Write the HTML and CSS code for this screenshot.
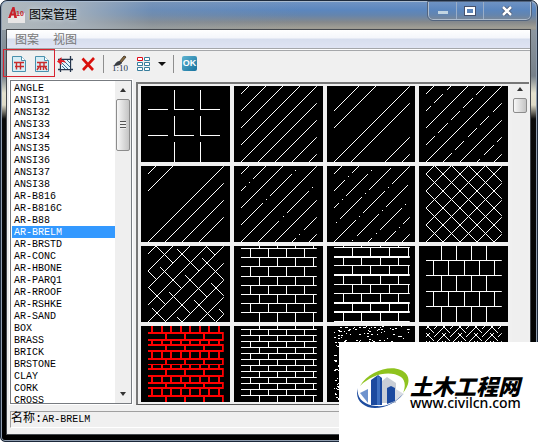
FILE: index.html
```html
<!DOCTYPE html>
<html lang="zh-CN">
<head>
<meta charset="utf-8">
<title>图案管理</title>
<link rel="stylesheet" href="styles.css">
</head>
<body>
<div class="window">
  <header class="titlebar">
    <svg class="app-icon" width="17" height="17" viewBox="0 0 17 17" aria-hidden="true">
      <path d="M0 9 L17 6 V16 H0Z" fill="#e8e6e6"/>
      <path d="M0 11 L4.5 0 H6.5 L9 11 H6.3 L5.9 8.6 H3.4 L2.6 11Z M4 6.5 H5.6 L5.1 3.6Z" fill="#c8202a" fill-rule="evenodd"/>
      <text x="8" y="9" class="app-icon-num">10</text>
    </svg>
    <h1>图案管理</h1>
    <div class="caption-buttons">
      <button type="button" aria-label="最小化"><svg width="12" height="10" viewBox="0 0 12 10"><path d="M1 5h10v3H1z" fill="#c2d5e2"/></svg></button>
      <button type="button" aria-label="最大化"><svg width="12" height="10" viewBox="0 0 12 10"><rect x="1.500" y="1.500" width="9" height="7" fill="none" stroke="#46516c" stroke-width="3"/><rect x="2" y="2" width="8" height="6" fill="none" stroke="#fff" stroke-width="2"/></svg></button>
      <button type="button" class="close" aria-label="关闭"><svg width="12" height="10" viewBox="0 0 12 10"><path d="M2 1 L10 9 M10 1 L2 9" stroke="#46516c" stroke-width="4"/><path d="M2 1 L10 9 M10 1 L2 9" stroke="#fff" stroke-width="2.500"/></svg></button>
    </div>
  </header>
  <div class="client">
    <nav class="menubar"><button type="button">图案</button><button type="button">视图</button></nav>
    <div class="toolbar">
      <button type="button" aria-label="图案文件"><svg width="16" height="18" viewBox="0 0 16 18"><path d="M1.500 1.500h9l4 4v11h-13z" fill="#d7eef6" stroke="#4a91ad"/><path d="M10.500 1.500v4h4" fill="#fff" stroke="#4a91ad"/><path d="M3 7.500h10M4 11.500h9M5.500 7.500v7M9.500 7.500v7" stroke="#c92b2b" stroke-width="1.400" fill="none"/></svg></button>
      <button type="button" aria-label="图案组"><svg width="16" height="18" viewBox="0 0 16 18"><path d="M1.500 1.500h9l4 4v11h-13z" fill="#d7eef6" stroke="#4a91ad"/><path d="M10.500 1.500v4h4" fill="#fff" stroke="#4a91ad"/><path d="M3 7.500h10M3 11.500h10M6 7.500v4M10 7.500v4M3 15l2-3M6.500 12v3M9.500 12v3M13 15l-2-3" stroke="#c92b2b" stroke-width="1.400" fill="none"/></svg></button>
      <button type="button" aria-label="填充"><svg width="16" height="18" viewBox="0 0 16 18"><path d="M3.500 3v14M13.500 1v16M1 4.500h15M1 14.500h15" stroke="#26364d" stroke-width="1.300"/><path d="M4 5h9v9H4z" fill="#e4f3fa"/><path d="M5 11l3 3M4 7l7 7M6 5l7 7M10 5l3 3" stroke="#3c7197"/><path d="M0 6.500L4.500 2v3c3 0 4 1 4 3-1-1-2-1-4-1v3z" fill="#e31b23"/></svg></button>
      <button type="button" aria-label="删除"><svg width="16" height="18" viewBox="0 0 16 18"><path d="M2.500 3.500L13 15M14 3L3 15" stroke="#d9100c" stroke-width="2.600" fill="none"/></svg></button>
      <span class="separator"></span>
      <button type="button" aria-label="比例"><svg width="16" height="18" viewBox="0 0 16 18"><path d="M7 7L12 1l2 1-5 6z" fill="#8c6b3a" stroke="#4c4032"/><path d="M2 11c1-3 3-5 6-5l2 2c-1 2-4 3-8 3z" fill="#3a3d42"/><text x="0" y="16" class="scale-text">1:10</text></svg></button>
      <button type="button" aria-label="布局"><svg width="16" height="18" viewBox="0 0 16 18"><path d="M9.500 2.500h5v3h-5zM2.500 7.500h5v3h-5zM9.500 7.500h5v3h-5zM2.500 12.500h5v3h-5zM9.500 12.500h5v3h-5z" fill="#fff" stroke="#377d9c"/><path d="M2.500 2.500h5v3h-5z" fill="#fff" stroke="#e00b1a"/></svg></button>
      <button type="button" aria-label="布局选项"><svg width="8" height="18" viewBox="0 0 8 18"><path d="M0 7h8l-4 4z" fill="#111"/></svg></button>
      <span class="separator"></span>
      <button type="button" class="ok">OK</button>
    </div>
    <main class="panes">
      <div class="list-pane">
        <ul class="names" role="listbox" aria-label="图案名称"></ul>
        <div class="scroll" aria-hidden="true"><i class="up"></i><i class="thumb grip"></i><i class="down"></i></div>
      </div>
      <div class="gallery-pane">
        <div class="gallery"></div>
        <div class="scroll" aria-hidden="true"><i class="up"></i><i class="thumb"></i></div>
      </div>
    </main>
    <footer class="status"><span class="status-label">名称:</span>AR-BRELM</footer>
  </div>
</div>
<div class="highlight" aria-hidden="true"></div>
<aside class="brand">
  <svg width="54" height="46" viewBox="0 0 54 46" aria-hidden="true">
    <path d="M26 13l5-4 9 6v20H26z" fill="#c9ced6"/><path d="M38 20l10 6-10 9z" fill="#d9dde3"/>
    <path d="M15 12l7-5 4 3v27H15z" fill="#1c4a9f"/><path d="M21 8l3 1v28h-3z" fill="#3e70c0"/>
    <path d="M31 20l4-2 4 2v13l-8 3z" fill="#1c4a9f"/><path d="M4 25l8-4v14z" fill="#6e93ce"/>
    <path d="M4 18C14 1 42-6 51 7c4 7-1 14-4 18 3-7 2-13-2-16C34 2 16 6 4 18z" fill="#8fc31f"/>
    <path d="M2 20c-4 11 5 20 17 20 11 0 22-6 28-14-8 9-17 13-27 12C8 37 0 30 2 20z" fill="#1d4c9f"/>
  </svg>
  <div class="brand-text"><strong>土木工程网</strong><span>www.civilcn.com</span></div>
</aside>
<script src="script.js"></script>
</body>
</html>
```
FILE: styles.css
```css
* { box-sizing: border-box; }
body {
  margin: 0;
  height: 100vh;
  overflow: hidden;
  position: relative;
  font: 12px/16px "Liberation Sans", "Noto Sans CJK SC", sans-serif;
  color: #000;
}
button { font: inherit; color: inherit; border: 0; background: none; padding: 0; margin: 0; }
svg { display: block; }
.window {
  height: 100%;
  display: flex;
  flex-direction: column;
  padding: 0 7px 7px 6px;
  border: 1px solid #1d2a3c;
  border-radius: 7px 7px 5px 5px;
  box-shadow: inset 0 0 0 1px #8f9daf;
  background: linear-gradient(#7f98b4 0, #8d97a0 30px, #77818a 75px, #e4e2cf 92px, #dedbc8 104px, #0a0a0a 118px, #000 100%);
}
.titlebar {
  flex: none;
  height: 29px;
  margin: 0 -6px 0 -5px;
  padding: 0 5px 2px 6px;
  display: flex;
  align-items: center;
  gap: 4px;
  border-top: 1px solid #a9bbd0;
  border-radius: 6px 6px 0 0;
  background:
    linear-gradient(90deg, #b2babe 0, #a5b1bcdd 80px, #8597ab66 150px, #8597ab00 300px),
    linear-gradient(#6f93c3 0, #5b86be 8px, #6485ae 13px, #85898c 20px, #a19f95 26px, #8b8d8d 29px);
}
.app-icon-num { font: bold 7px "Liberation Sans", sans-serif; fill: #c8202a; }
h1 { margin: 0; font-size: 12px; font-weight: 400; text-shadow: 0 0 5px #e6edf2; }
.caption-buttons {
  align-self: flex-start;
  margin-left: auto;
  display: flex;
  border: 1px solid #aebdcf;
  border-top: 0;
  border-radius: 0 0 5px 5px;
  outline: 1px solid #52647e;
}
.caption-buttons button { width: 27px; height: 17px; display: grid; place-items: center; }
.caption-buttons button + button { border-left: 1px solid #9aaec8; }
.caption-buttons .close { width: 47px; }
.client {
  flex: 1;
  min-height: 0;
  display: flex;
  flex-direction: column;
  background: #f0f0f0;
  outline: 1px solid #45494e;
}
.menubar {
  flex: none;
  height: 21px;
  padding: 2px 8px 0;
  display: flex;
  gap: 14px;
  align-items: center;
  color: #777;
  background: linear-gradient(#fff 0, #f4f6fb 8px, #d7deee 9px, #dfe4f3 18px);
  border-bottom: 3px double #a5a7aa;
}
.toolbar { flex: none; height: 29px; padding: 0 4px 4px; display: flex; align-items: center; gap: 7px; }
.separator { width: 1px; height: 18px; background: #8e8e8e; margin-right: 1px; }
.scale-text { font: 9px "Liberation Serif", serif; fill: #23344e; }
.toolbar .ok {
  width: 15px;
  height: 15px;
  border-radius: 2px;
  background: linear-gradient(135deg, #5eb3d1, #16729e);
  color: #fff;
  font: bold 9px/15px "Liberation Sans", sans-serif;
}
.panes { flex: 1; min-height: 0; display: flex; gap: 4px; padding: 0 1px 0 3px; }
.list-pane {
  flex: 0 0 122px;
  display: flex;
  background: #fff;
  border: 1px solid #777b80;
  outline: 1px solid #fff;
  overflow: hidden;
}
.names {
  flex: 1;
  margin: 0;
  padding: 1px 0 0 1px;
  list-style: none;
  font: 10px/14px "Liberation Mono", monospace;
}
.names li { height: 12px; padding-left: 2px; }
.names .selected { background: #3399ff; color: #fff; }
.scroll { flex: 0 0 16px; display: flex; flex-direction: column; align-items: center; background: #efefef; }
.up, .down { border: 3px solid transparent; flex: none; }
.up { border-bottom: 4px solid #333; border-top: 0; margin: 7px 0; }
.gallery-pane .up { margin: 3px 0 7px; }
.down { border-top: 4px solid #333; border-bottom: 0; margin: auto 0 7px; }
.thumb {
  flex: none;
  width: 14px;
  height: 15px;
  border: 1px solid #8c8c8c;
  border-radius: 2px;
  background: linear-gradient(90deg, #f7f7f7, #ddd 50%, #c4c4c4);
}
.grip { height: 52px; display: grid; place-items: center; }
.grip::after { content: ""; width: 6px; height: 8px; background: repeating-linear-gradient(#555 0 1px, #eee 1px 3px); }
.gallery-pane {
  flex: 1;
  min-width: 0;
  display: flex;
  gap: 4px;
  padding-right: 1px;
  border: 2px solid #777;
  border-right: 0;
  border-bottom: 1px solid #555;
  margin-top: 2px;
  margin-bottom: -1px;
}
.gallery {
  flex: 1;
  min-width: 0;
  display: grid;
  grid-template-columns: repeat(4, 1fr);
  grid-auto-rows: 76px;
  gap: 4px;
  padding: 2px 0 0 3px;
  overflow: hidden;
}
.tile { width: 100%; height: 76px; background: #000; color: #fff; }
.tile path { fill: none; stroke: currentColor; shape-rendering: crispEdges; }
.tile.active { color: #f00; }
.tile.active path { stroke-width: 2; }
.tile .heavy { stroke-width: 2; }
.status {
  flex: none;
  height: 17px;
  margin: 7px 3px 6px;
  border: 1px solid #a0a0a0;
  border-right-color: #fff;
  border-bottom-color: #fff;
  font: 10px/15px "Liberation Mono", monospace;
}
.status-label { font: 12px/15px "Liberation Mono", "Noto Sans CJK SC", monospace; }
.highlight { position: absolute; left: 3px; top: 49px; width: 52px; height: 28px; border: 1px solid #d8232f; }
.brand {
  position: absolute;
  right: 0;
  bottom: 0;
  width: 199px;
  height: 100px;
  padding: 0 0 2px 17px;
  display: flex;
  align-items: center;
  background: #fff;
}
.brand-text { display: flex; flex-direction: column; white-space: nowrap; }
.brand-text strong { font: italic 900 22px/24px "Noto Sans CJK SC", sans-serif; }
.brand-text span { font: 500 14px/12px "Noto Sans", sans-serif; }
```
FILE: script.js
```js
const names = ["ANGLE", "ANSI31", "ANSI32", "ANSI33", "ANSI34", "ANSI35", "ANSI36", "ANSI37", "ANSI38",
  "AR-B816", "AR-B816C", "AR-B88", "AR-BRELM", "AR-BRSTD", "AR-CONC", "AR-HBONE", "AR-PARQ1", "AR-RROOF",
  "AR-RSHKE", "AR-SAND", "BOX", "BRASS", "BRICK", "BRSTONE", "CLAY", "CORK", "CROSS"];
document.querySelector(".names").innerHTML = names.map(n =>
  n === "AR-BRELM"
    ? `<li role="option" aria-selected="true" class="selected">${n}</li>`
    : `<li role="option">${n}</li>`).join("");

// Each swatch is drawn on a 76 x 76 field.
const path = (d, cls = "") => `<path class="${cls}" d="${d}"/>`;
const diag = (c, from = 0, to = c) => `M${from} ${c - from}L${to} ${c - to}`;
const rising = list => path(list.map(c => diag(c)).join(""));
const pieces = rows => path(rows.map(([c, ...p]) => {
  let d = "";
  for (let i = 0; i < p.length; i += 2) d += diag(c, p[i], p[i + 1]);
  return d;
}).join(""));
const all = [8, 25, 42, 59, 76, 93, 110, 127, 144];

function bricks(levels, first, second, heavy = []) {
  let d = "", h = "";
  const edges = [0, ...levels, 76];
  levels.forEach(y => {
    if (heavy.includes(y)) h += `M0 ${y}H76`;
    else d += `M0 ${y + 0.5}H76`;
  });
  for (let i = 0; i < edges.length - 1; i++) {
    (i % 2 ? second : first).forEach(x => { d += `M${x + 0.5} ${edges[i]}V${edges[i + 1]}`; });
  }
  return path(d) + path(h, "heavy");
}

function angle() {
  let d = "";
  for (const y of [23, 49]) for (const x of [0, 26, 52]) d += `M${x} ${y + 0.5}h20`;
  for (const x of [26, 52]) for (const y of [4, 30, 56]) d += `M${x + 0.5} ${y}v20`;
  return path(d);
}
function cross() {
  return rising(all) + path([-59, -42, -25, -8, 9, 26, 43, 60]
    .map(o => `M${o} 0l76 76`).join(""));
}
function basket() {
  const s = [[8, 0, 17], [12, 21, 22], [29, 3, 22], [0, 25, 8], [0, 41, 17], [21, 46, 21], [37, 29, 22],
    [54, 12, 22], [58, 0, 9], [63, 37, 13], [46, 54, 21], [4, 62, 13], [29, 71, 5], [71, 63, 5]];
  return rising(all) + path(s.map(([x, y, n]) => `M${x} ${y}l${n} ${n}`).join(""));
}
function concrete() {
  let seed = 7, d = "";
  const next = n => (seed = (seed * 16807) % 2147483647) % n;
  for (let i = 0; i < 420; i++) d += `M${next(76)} ${next(76) + 0.5}h${1 + next(2)}`;
  return path(d);
}
function herringbone() {
  let d = "";
  for (let y = -17; y < 84; y += 8)
    for (let x = -8; x < 84; x += 16) d += `M${x} ${y + 12}l12-12M${x + 8} ${y}l8 8`;
  return path(d);
}

const swatches = [
  angle(),
  rising(all),
  rising([25, 42, 76, 93, 127, 144]),
  rising([8, 42, 76, 110, 144]) + pieces([
    [25, 0, 5, 8, 17, 21, 25], [59, 0, 9, 12, 22, 25, 34, 37, 47, 50, 59],
    [93, 17, 26, 29, 38, 42, 51, 54, 63, 67, 76], [127, 51, 54, 58, 68, 71, 76]]),
  rising([8, 25, 76, 93, 110, 127]),
  rising([8, 42, 76, 110, 144]) + pieces([
    [25, 0, 5, 8, 9, 12, 25], [59, 0, 22, 25, 26, 29, 51, 54, 55],
    [93, 17, 38, 42, 43, 46, 68, 71, 72], [127, 51, 55, 58, 59, 63, 76]]),
  rising([8, 144]) + pieces([
    [25, 0, 11, 14, 15, 18, 25], [42, 0, 5, 8, 9, 12, 34, 37, 38],
    [59, 2, 3, 6, 28, 31, 32, 35, 57], [76, 0, 22, 25, 26, 29, 51, 54, 55, 58, 76],
    [93, 18, 19, 23, 45, 48, 49, 52, 74], [110, 34, 38, 42, 43, 46, 68, 71, 72],
    [127, 51, 62, 65, 66, 69, 76]]),
  cross(),
  basket(),
  bricks([2, 11, 20, 30, 39, 48, 57, 66], [18, 36, 54, 72], [9, 27, 45, 63]),
  bricks([1, 11, 19, 29, 38, 47, 57, 66, 75], [9, 27, 46, 64], [18, 36, 55, 74], [11, 29, 57, 66]),
  bricks([14, 29, 45, 60], [15, 30, 45, 60], [7, 22, 38, 53, 68]),
  bricks([6, 13, 18, 24, 32, 38, 43, 50, 57, 62, 70], [4, 14, 23, 33, 42, 52, 61, 71], [18, 37, 56, 75]),
  bricks([3, 9, 15, 21, 27, 33, 39, 45, 51, 57, 63, 69], [18, 36, 54, 72], [9, 27, 45, 63]),
  concrete(),
  herringbone()
];
document.querySelector(".gallery").innerHTML = swatches.map((s, i) =>
  `<svg class="tile${i === 12 ? " active" : ""}" viewBox="0 0 89 76" aria-hidden="true"><svg x="7" width="76" height="76" viewBox="0 0 76 76">${s}</svg></svg>`).join("");
```
